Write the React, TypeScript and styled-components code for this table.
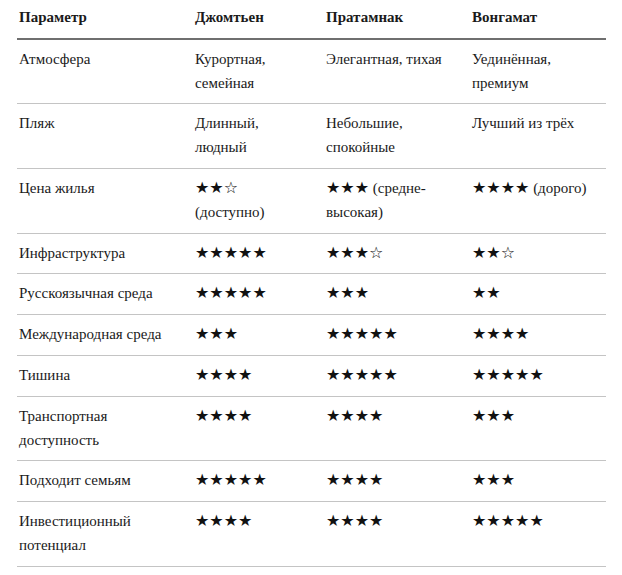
import React from "react";
import styled, { createGlobalStyle } from "styled-components";

const Global = createGlobalStyle`
  html, body { margin: 0; padding: 0; background: #fff; }
  body { font-family: "Liberation Serif", "DejaVu Serif", serif; color: #1a1a1a; }
`;

const Wrap = styled.div`
  padding: 0 16px 0 17px;
`;

const Table = styled.table`
  width: 589px;
  border-collapse: collapse;
  table-layout: fixed;
  font-size: 15px;
  line-height: 23.8px;
`;

const Col = styled.col<{ $w: number }>`
  width: ${(p) => p.$w}px;
`;

const Th = styled.th`
  text-align: left;
  font-weight: 700;
  padding: 6px 14px 8px 2px;
  border-bottom: 2px solid #6f6f6f;
  vertical-align: top;
`;

const Td = styled.td`
  padding: 8px 14px 8px 2px;
  border-bottom: 1px solid #c4c4c4;
  vertical-align: top;
`;

const Stars = styled.span`
  font-family: "DejaVu Sans", sans-serif;
  font-size: 16px;
  line-height: 1;
  color: #111;
`;

const Note = styled.span`
  display: inline;
`;

type Cell = string;
const rows: Cell[][] = [
  ["Атмосфера", "Курортная, семейная", "Элегантная, тихая", "Уединённая, премиум"],
  ["Пляж", "Длинный, людный", "Небольшие, спокойные", "Лучший из трёх"],
  ["Цена жилья", "★★☆ (доступно)", "★★★ (средне-высокая)", "★★★★ (дорого)"],
  ["Инфраструктура", "★★★★★", "★★★☆", "★★☆"],
  ["Русскоязычная среда", "★★★★★", "★★★", "★★"],
  ["Международная среда", "★★★", "★★★★★", "★★★★"],
  ["Тишина", "★★★★", "★★★★★", "★★★★★"],
  ["Транспортная доступность", "★★★★", "★★★★", "★★★"],
  ["Подходит семьям", "★★★★★", "★★★★", "★★★"],
  ["Инвестиционный потенциал", "★★★★", "★★★★", "★★★★★"],
];

function renderCell(text: string) {
  const m = text.match(/^([★☆]+)(.*)$/);
  if (!m) return text;
  return (
    <>
      <Stars>{m[1]}</Stars>
      {m[2] ? <Note>{m[2]}</Note> : null}
    </>
  );
}

export default function App() {
  return (
    <Wrap>
      <Global />
      <Table>
        <colgroup>
          <Col $w={176} />
          <Col $w={131} />
          <Col $w={146} />
          <Col $w={136} />
        </colgroup>
        <thead>
          <tr>
            <Th>Параметр</Th>
            <Th>Джомтьен</Th>
            <Th>Пратамнак</Th>
            <Th>Вонгамат</Th>
          </tr>
        </thead>
        <tbody>
          {rows.map((r) => (
            <tr key={r[0]}>
              {r.map((c, i) => (
                <Td key={i}>{renderCell(c)}</Td>
              ))}
            </tr>
          ))}
        </tbody>
      </Table>
    </Wrap>
  );
}
